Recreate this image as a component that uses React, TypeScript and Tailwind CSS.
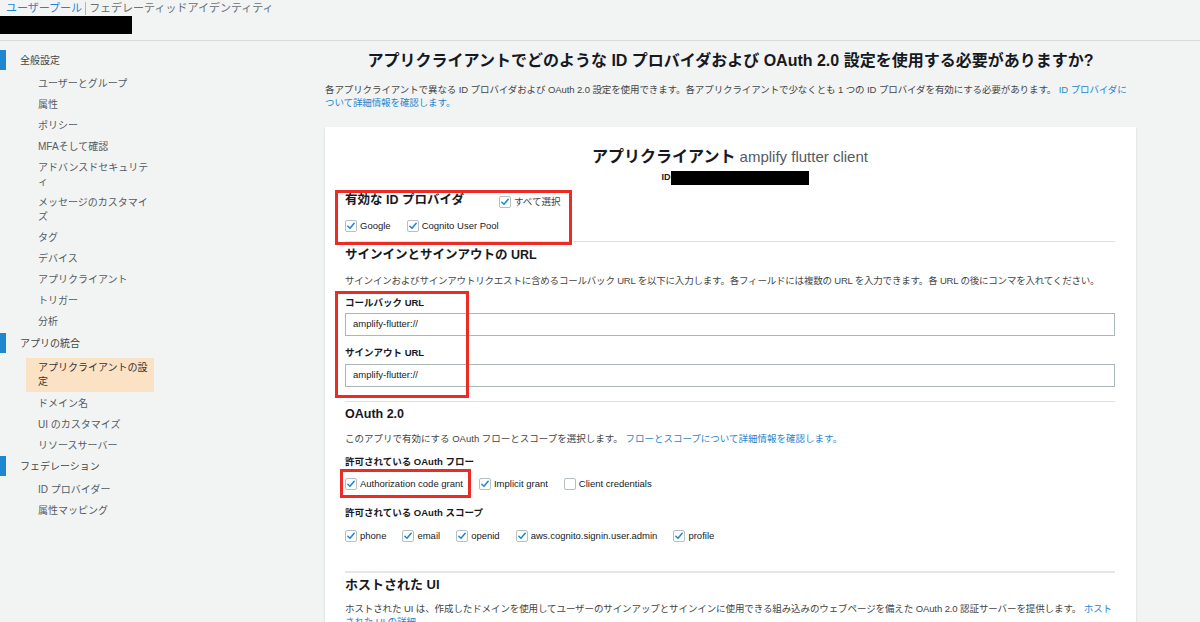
import React from 'react';

const Check: React.FC<{ checked?: boolean }> = ({ checked = true }) => (
  <span className="flex h-[12px] w-[12px] shrink-0 items-center justify-center rounded-[2px] border border-[#b5bfc4] bg-white">
    {checked && (
      <svg viewBox="0 0 12 12" className="h-[10px] w-[10px]">
        <path d="M2.2 6.3 L4.8 8.8 L9.8 2.8" fill="none" stroke="#1f86d0" strokeWidth="1.8" strokeLinecap="round" strokeLinejoin="round" />
      </svg>
    )}
  </span>
);

const Box: React.FC<{ label: string; checked?: boolean }> = ({ label, checked }) => (
  <label className="flex items-center gap-[3px] whitespace-nowrap">
    <Check checked={checked} />
    <span>{label}</span>
  </label>
);

type NavItem = { label: string; group?: boolean; active?: boolean };

const nav: NavItem[] = [
  { label: '全般設定', group: true },
  { label: 'ユーザーとグループ' },
  { label: '属性' },
  { label: 'ポリシー' },
  { label: 'MFAそして確認' },
  { label: 'アドバンスドセキュリティ' },
  { label: 'メッセージのカスタマイズ' },
  { label: 'タグ' },
  { label: 'デバイス' },
  { label: 'アプリクライアント' },
  { label: 'トリガー' },
  { label: '分析' },
  { label: 'アプリの統合', group: true },
  { label: 'アプリクライアントの設定', active: true },
  { label: 'ドメイン名' },
  { label: 'UI のカスタマイズ' },
  { label: 'リソースサーバー' },
  { label: 'フェデレーション', group: true },
  { label: 'ID プロバイダー' },
  { label: '属性マッピング' },
];

const Sidebar: React.FC = () => (
  <nav className="w-[325px] shrink-0 pt-[9px] text-[10px] text-[#545b64]">
    {nav.map((item, i) => {
      if (item.group) {
        const mt = item.label === 'アプリの統合' ? 'mt-[1px]' : 'mt-0';
        return (
          <div key={item.label} className={`flex h-[20px] items-center ${mt}`}>
            <span className="h-[20px] w-[6px] bg-[#1f86d0]" />
            <span className="pl-[14px] text-[#444]">{item.label}</span>
          </div>
        );
      }
      if (item.active) {
        return (
          <div key={item.label} className="mt-[5px] ml-[26px] w-[128px] bg-[#fbe2c4] py-[3px] pl-[12px] pr-[2px] leading-[14px] text-[#333]">
            {item.label}
          </div>
        );
      }
      const prev = nav[i - 1];
      const mt = prev.group ? 'mt-[3px]' : prev.active ? 'mt-[1px]' : 'mt-0';
      return (
        <div key={item.label} className={`ml-[38px] w-[114px] py-[3.5px] leading-[14px] ${mt}`}>
          {item.label}
        </div>
      );
    })}
  </nav>
);

export default function App() {
  return (
    <div className="h-[622px] w-[1200px] overflow-hidden bg-[#f2f4f4] font-['Liberation_Sans','Noto_Sans_CJK_JP',sans-serif] text-[#444]">
      {/* Header */}
      <div className="h-[41px] border-b border-[#d5dbdb]">
        <div className="flex h-[16px] items-center pl-[6px] text-[11px]">
          <span className="text-[#1f86d0]">ユーザープール</span>
          <span className="mx-[3px] h-[13px] w-px bg-[#aab7b8]" />
          <span className="text-[#687078]">フェデレーティッドアイデンティティ</span>
        </div>
        <div className="h-[18px] w-[132px] bg-black" />
      </div>

      <div className="flex">
        <Sidebar />

        {/* Main */}
        <main className="w-[811px]">
          <h1 className="mt-[8px] text-center text-[16px] font-bold leading-[24px] text-[#16191f]">
            アプリクライアントでどのような ID プロバイダおよび OAuth 2.0 設定を使用する必要がありますか?
          </h1>
          <p className="mt-[10px] text-[9.5px] leading-[13px] tracking-[-0.1px]">
            各アプリクライアントで異なる ID プロバイダおよび OAuth 2.0 設定を使用できます。各アプリクライアントで少なくとも 1 つの ID プロバイダを有効にする必要があります。{' '}
            <span className="text-[#1f86d0]">ID プロバイダについて詳細情報を確認します。</span>
          </p>

          <div className="mt-[18px] bg-white pl-[20px] pr-[21px] pt-[19px] shadow-[0_1px_2px_rgba(0,0,0,0.15)]">
            <div className="text-center leading-[22px]">
              <span className="text-[16px] font-bold text-[#16191f]">アプリクライアント</span>
              <span className="text-[15px] text-[#545b64]"> amplify flutter client</span>
            </div>
            <div className="mt-[3px] flex h-[14px] items-center justify-center">
              <span className="pl-[10px] text-[9px] font-bold text-[#16191f]">ID</span>
              <span className="h-[14px] w-[138px] bg-black" />
            </div>

            {/* ID providers */}
            <div className="relative">
              <div className="mt-[6px] flex h-[18px] items-center">
                <h2 className="w-[154px] text-[12.5px] font-bold text-[#16191f]">有効な ID プロバイダ</h2>
                <div className="pt-[4px] text-[9.5px]">
                  <Box label="すべて選択" />
                </div>
              </div>
              <div className="mt-[10px] flex h-[14px] items-center gap-[16px] text-[9.5px] text-[#16191f]">
                <Box label="Google" />
                <Box label="Cognito User Pool" />
              </div>
              <div className="absolute left-[-10px] top-[-1px] h-[55px] w-[237px] border-[3px] border-[#ec2b24]" />
            </div>
            <div className="mt-[8px] border-t border-[#dde1e2]" />

            {/* URLs */}
            <h2 className="mt-[4px] text-[12.5px] font-bold leading-[18px] text-[#16191f]">サインインとサインアウトの URL</h2>
            <p className="mt-[11px] whitespace-nowrap text-[9.5px] leading-[12px] tracking-[-0.2px]">
              サインインおよびサインアウトリクエストに含めるコールバック URL を以下に入力します。各フィールドには複数の URL を入力できます。各 URL の後にコンマを入れてください。
            </p>
            <div className="relative">
              <div className="mt-[10px] text-[9.5px] font-bold leading-[12px] text-[#16191f]">コールバック URL</div>
              <div className="mt-[4px] flex h-[23px] items-center border border-[#aab7b8] pl-[7px] text-[9.5px] text-[#16191f]">amplify-flutter://</div>
              <div className="mt-[11px] text-[9.5px] font-bold leading-[12px] text-[#16191f]">サインアウト URL</div>
              <div className="mt-[5px] flex h-[23px] items-center border border-[#aab7b8] pl-[7px] text-[9.5px] text-[#16191f]">amplify-flutter://</div>
              <div className="absolute left-[-10px] top-[-6px] h-[107px] w-[134px] border-[3px] border-[#ec2b24]" />
            </div>
            <div className="mt-[14px] border-t border-[#dde1e2]" />

            {/* OAuth */}
            <h2 className="mt-[3px] text-[12.5px] font-bold leading-[18px] text-[#16191f]">OAuth 2.0</h2>
            <p className="mt-[10px] text-[9.5px] leading-[12px]">
              このアプリで有効にする OAuth フローとスコープを選択します。 <span className="text-[#1f86d0]">フローとスコープについて詳細情報を確認します。</span>
            </p>
            <div className="mt-[11px] text-[9.5px] font-bold leading-[12px] text-[#16191f]">許可されている OAuth フロー</div>
            <div className="relative mt-[9px] flex h-[14px] items-center gap-[16px] text-[9.5px] text-[#16191f]">
              <Box label="Authorization code grant" />
              <Box label="Implicit grant" />
              <Box label="Client credentials" checked={false} />
              <div className="absolute left-[-5px] top-[-8px] h-[29px] w-[131px] border-[3px] border-[#ec2b24]" />
            </div>
            <div className="mt-[16px] text-[9.5px] font-bold leading-[12px] text-[#16191f]">許可されている OAuth スコープ</div>
            <div className="mt-[10px] flex h-[14px] items-center gap-[16px] text-[9.5px] text-[#16191f]">
              <Box label="phone" />
              <Box label="email" />
              <Box label="openid" />
              <Box label="aws.cognito.signin.user.admin" />
              <Box label="profile" />
            </div>
            <div className="mt-[28px] border-t-2 border-[#e4e7e8]" />

            {/* Hosted UI */}
            <h2 className="mt-[3px] text-[13px] font-bold leading-[18px] text-[#16191f]">ホストされた UI</h2>
            <p className="mt-[8px] pb-[20px] text-[9.5px] leading-[13px] tracking-[-0.1px]">
              ホストされた UI は、作成したドメインを使用してユーザーのサインアップとサインインに使用できる組み込みのウェブページを備えた OAuth 2.0 認証サーバーを提供します。 <span className="text-[#1f86d0]">ホストされた UI の詳細</span>
            </p>
          </div>
        </main>
      </div>
    </div>
  );
}
